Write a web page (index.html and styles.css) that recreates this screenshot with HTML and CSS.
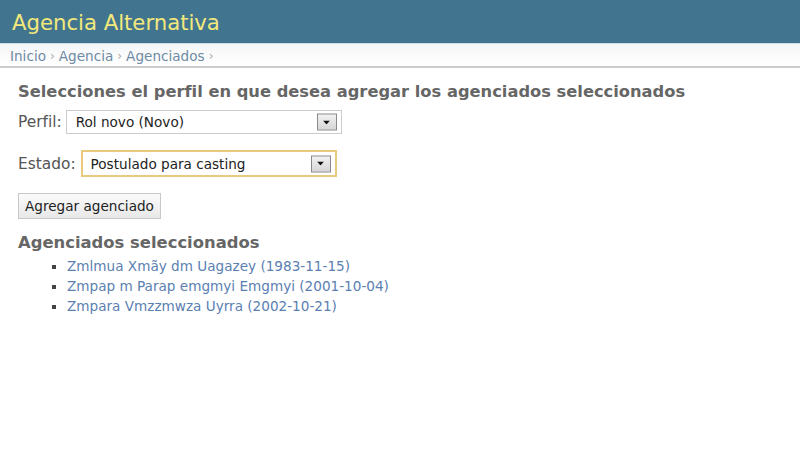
FILE: index.html
```html
<!DOCTYPE html>
<html lang="es">
<head>
<meta charset="utf-8">
<title>Agencia Alternativa</title>
<link rel="stylesheet" href="styles.css">
</head>
<body>
<header class="header">
  <h1 class="brand">Agencia Alternativa</h1>
</header>
<nav class="breadcrumbs">
  <a href="#">Inicio</a> <span class="sep">›</span> <a href="#">Agencia</a> <span class="sep">›</span> <a href="#">Agenciados</a> <span class="sep">›</span>
</nav>
<main class="content">
  <h1 class="title">Selecciones el perfil en que desea agregar los agenciados seleccionados</h1>
  <form class="form">
    <div class="row">
      <label class="label">Perfil:</label>
      <div class="select select-perfil">
        <span class="select-text">Rol novo (Novo)</span>
        <span class="arrow"><svg width="7" height="4" viewBox="0 0 7 4"><path d="M0 0h7L3.5 4z" fill="#111"/></svg></span>
      </div>
    </div>
    <div class="row row-estado">
      <label class="label">Estado:</label>
      <div class="select select-estado">
        <span class="select-text">Postulado para casting</span>
        <span class="arrow"><svg width="7" height="4" viewBox="0 0 7 4"><path d="M0 0h7L3.5 4z" fill="#111"/></svg></span>
      </div>
    </div>
    <button type="button" class="button">Agregar agenciado</button>
  </form>
  <h2 class="subtitle">Agenciados seleccionados</h2>
  <ul class="list">
    <li><a href="#">Zmlmua Xmãy dm Uagazey (1983-11-15)</a></li>
    <li><a href="#">Zmpap m Parap emgmyi Emgmyi (2001-10-04)</a></li>
    <li><a href="#">Zmpara Vmzzmwza Uyrra (2002-10-21)</a></li>
  </ul>
</main>
</body>
</html>
```

FILE: styles.css
```css
* { box-sizing: border-box; }
html, body { margin: 0; padding: 0; background: #fff; }
body {
  font-family: "DejaVu Sans", Verdana, sans-serif;
  font-size: 13.6px;
  color: #333;
}
a { text-decoration: none; color: #5b80b2; }

.header {
  background: #41758f;
  height: 44px;
  padding: 0 12px;
  display: flex;
  align-items: center;
  border-bottom: 1px solid #cfdde6;
}
.brand {
  margin: 0;
  font-weight: normal;
  font-size: 21.2px;
  color: #f2e87c;
  position: relative;
  top: 1px;
}

.breadcrumbs {
  height: 24px;
  padding: 0 10px;
  display: flex;
  align-items: center;
  gap: 4px;
  background: linear-gradient(#f3f5f7, #fbfbfb 50%, #fff);
  border-bottom: 2px solid #ccc;
  font-size: 13.6px;
  color: #aaa;
  padding-top: 2px;
}
.breadcrumbs a { color: #6e8aa4; }
.breadcrumbs .sep { color: #aaa; font-size: 12px; }

.content { padding: 14px 18px; }

.title {
  margin: 0 0 9px;
  font-size: 16.3px;
  font-weight: bold;
  color: #666;
}

.form { display: flex; flex-direction: column; align-items: flex-start; }
.row { display: flex; align-items: center; gap: 4px; height: 24px; }
.row-estado { margin-top: 16px; height: 27px; gap: 5px; }
.label { font-size: 15.4px; color: #555; }

.select {
  position: relative;
  display: flex;
  align-items: center;
  background: #fff;
  font-size: 13.6px;
  color: #222;
}
.select-perfil { width: 276px; height: 24px; border: 1px solid #ccc; padding-left: 9px; }
.select-estado { width: 256px; height: 27px; border: 2px solid #e9c97d; padding-left: 8px; }
.select-text { flex: 1; }
.arrow {
  position: absolute;
  right: 4px;
  top: 50%;
  transform: translateY(-50%);
  width: 20px;
  height: 17px;
  border: 1px solid #8a8a8a;
  background: linear-gradient(#f2f2f2, #d6d6d6);
  display: flex;
  align-items: center;
  justify-content: center;
}

.button {
  margin-top: 16px;
  font-family: inherit;
  font-size: 13.6px;
  color: #222;
  height: 26px;
  padding: 0 6px;
  background: linear-gradient(#fbfbfb, #e8e8e8);
  border: 1px solid #c8c8c8;
  border-radius: 0;
}

.subtitle {
  margin: 14px 0 4px;
  font-size: 16.4px;
  font-weight: bold;
  color: #666;
}
.list {
  margin: 0;
  padding-left: 49px;
  list-style: square;
  font-size: 13.6px;
  line-height: 20px;
}
.list li { color: #444; }
.list a { color: #5b80b2; }
```
